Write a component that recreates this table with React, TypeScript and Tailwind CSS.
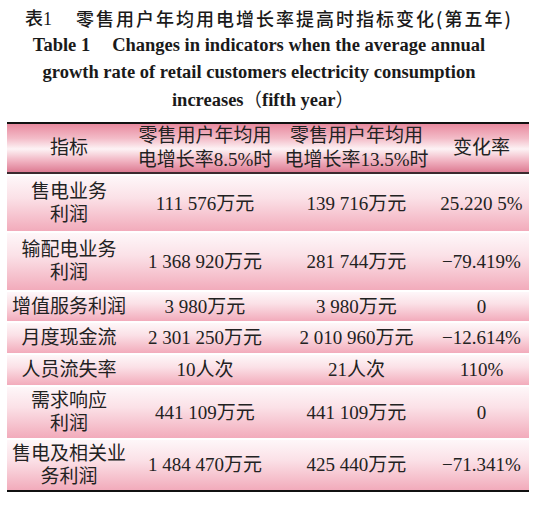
import React from "react";

const rows = [
  { name: ["售电业务", "利润"], a: "111 576万元", b: "139 716万元", c: "25.220 5%", h: "h-[55px]" },
  { name: ["输配电业务", "利润"], a: "1 368 920万元", b: "281 744万元", c: "−79.419%", h: "h-[57px]" },
  { name: ["增值服务利润"], a: "3 980万元", b: "3 980万元", c: "0", h: "h-[29px]" },
  { name: ["月度现金流"], a: "2 301 250万元", b: "2 010 960万元", c: "−12.614%", h: "h-[30px]" },
  { name: ["人员流失率"], a: "10人次", b: "21人次", c: "110%", h: "h-[30px]" },
  { name: ["需求响应", "利润"], a: "441 109万元", b: "441 109万元", c: "0", h: "h-[51px]" },
  { name: ["售电及相关业", "务利润"], a: "1 484 470万元", b: "425 440万元", c: "−71.341%", h: "h-[50px]" },
];

const cols = "grid grid-cols-[124px_148px_155px_95px]";

export default function App() {
  return (
    <div className="w-[538px] h-[506px] bg-white text-[#222] font-['Liberation_Serif','Noto_Sans_CJK_SC',serif]">
      {/* Chinese title */}
      <div className="pt-[5px] h-[31px] flex justify-center items-center font-['Noto_Sans_CJK_SC',sans-serif] font-medium text-[18px] leading-[24px] text-[#1a1a1a]">
        <span className="font-['Liberation_Serif','Noto_Sans_CJK_SC',serif]">
          <span className="font-['Noto_Sans_CJK_SC',sans-serif]">表</span>1
        </span>
        <span className="ml-[24px] tracking-[2px]">零售用户年均用电增长率提高时指标变化(第五年)</span>
      </div>

      {/* English title */}
      <div className="pr-[20px] pt-[1px] font-bold text-[18.5px] leading-[26.5px] text-center text-[#1a1a1a]">
        <div>
          Table 1<span className="inline-block w-[22px]" />Changes in indicators when the average annual
        </div>
        <div>growth rate of retail customers electricity consumption</div>
        <div className="pl-[8px]">
          increases<span className="font-['Noto_Sans_CJK_SC',sans-serif] font-normal">（</span>fifth year
          <span className="font-['Noto_Sans_CJK_SC',sans-serif] font-normal">）</span>
        </div>
      </div>

      {/* Table */}
      <div className="mx-[7px] mt-[8px] w-[522px] border-t-2 border-b-2 border-[#111] text-[19px] leading-[23px]">
        <div
          className={`${cols} h-[50px] border-b-2 border-[#3b2a2f] bg-[linear-gradient(to_bottom,#e88a9f_0%,#f3bcc8_30%,#fdf3f5_52%,#f0b0bf_78%,#dd7c93_100%)]`}
        >
          <div className="flex items-center justify-center">指标</div>
          <div className="flex flex-col items-center justify-center leading-[24px]">
            <span>零售用户年均用</span>
            <span>电增长率8.5%时</span>
          </div>
          <div className="flex flex-col items-center justify-center leading-[24px]">
            <span>零售用户年均用</span>
            <span>电增长率13.5%时</span>
          </div>
          <div className="flex items-center justify-center">变化率</div>
        </div>

        <div className="flex flex-col gap-[2px] pt-[2px]">
          {rows.map((r, i) => (
            <div
              key={i}
              className={`${cols} ${r.h} bg-[linear-gradient(to_bottom,#fef7f9_0%,#fbe1e7_40%,#f2abbb_100%)]`}
            >
              <div className="flex flex-col items-center justify-center">
                {r.name.map((n, j) => (
                  <span key={j}>{n}</span>
                ))}
              </div>
              <div className="flex items-center justify-center">{r.a}</div>
              <div className="flex items-center justify-center">{r.b}</div>
              <div className="flex items-center justify-center">{r.c}</div>
            </div>
          ))}
        </div>
      </div>
    </div>
  );
}
